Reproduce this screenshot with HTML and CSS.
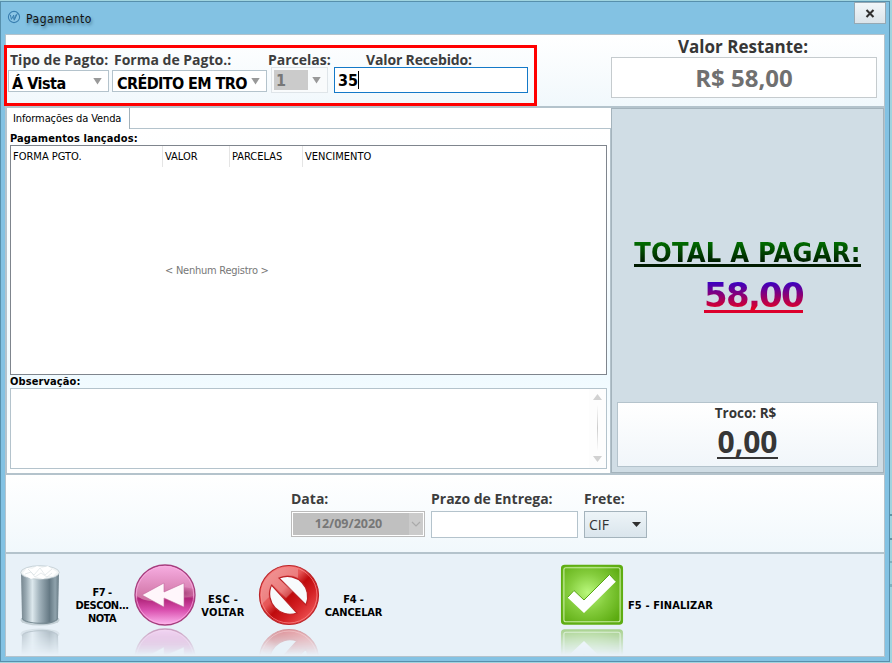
FILE: index.html
```html
<!DOCTYPE html>
<html lang="pt-BR">
<head>
<meta charset="utf-8">
<title>Pagamento</title>
<link rel="stylesheet" href="styles.css">
</head>
<body>
<div class="window">
  <header class="titlebar">
    <svg class="app-icon" width="14" height="14" viewBox="0 0 14 14"><circle cx="7" cy="7" r="5.6" fill="#8cc6e6" stroke="#397fb0" stroke-width="1.1"/><path d="M3.4 4.8l1 4.6 2.3-4.3.2 4.3 2.4-5M10.5 3.2L7.2 10.4" fill="none" stroke="#397fb0" stroke-width="1"/></svg>
    <span class="title">Pagamento</span>
    <button class="close" aria-label="Fechar"><svg width="10" height="9" viewBox="0 0 10 9"><path d="M1.5 1l7 7M8.500 1l-7 7" stroke="#303030" stroke-width="2.1"/></svg></button>
  </header>
  <main class="client">
    <section class="top">
      <div class="fields">
        <div class="field tipo"><label>Tipo de Pagto:</label><div class="combo"><span>Á Vista</span><i class="arrow"></i></div></div>
        <div class="field forma"><label>Forma de Pagto.:</label><div class="combo"><span>CRÉDITO EM TRO</span><i class="arrow"></i></div></div>
        <div class="field parcelas"><label>Parcelas:</label><div class="combo disabled"><span>1</span><i class="arrow"></i></div></div>
        <div class="field recebido"><label>Valor Recebido:</label><div class="entry"><span>35</span><i class="caret"></i></div></div>
      </div>
      <div class="restante"><div class="restante-label">Valor Restante:</div><div class="restante-value"><span>R$ 58,00</span></div></div>
    </section>
    <section class="middle">
      <div class="sale">
        <div class="tabs"><div class="tab">Informações da Venda</div><div class="tab-rest"></div></div>
        <div class="sheet">
          <div class="caption">Pagamentos lançados:</div>
          <div class="grid">
            <div class="columns"><span>FORMA PGTO.</span><span>VALOR</span><span>PARCELAS</span><span>VENCIMENTO</span></div>
            <div class="empty">&lt; Nenhum Registro &gt;</div>
          </div>
          <div class="caption obs">Observação:</div>
          <div class="memo"><div class="scroll"><i class="up"></i><i class="track"></i><i class="down"></i></div></div>
        </div>
      </div>
      <aside class="totals">
        <div class="total-label">TOTAL A PAGAR:</div>
        <div class="total-value">58,00</div>
        <div class="troco"><div class="troco-label">Troco: R$</div><div class="troco-value">0,00</div></div>
      </aside>
    </section>
    <section class="delivery">
      <div class="field data"><label>Data:</label><div class="date"><span>12/09/2020</span><i><svg width="10" height="6" viewBox="0 0 10 6"><path d="M1 1l4 4 4-4" fill="none" stroke="#aaa" stroke-width="1.2"/></svg></i></div></div>
      <div class="field prazo"><label>Prazo de Entrega:</label><div class="prazo-input"></div></div>
      <div class="field frete"><label>Frete:</label><div class="select"><span>CIF</span><i class="small-arrow"></i></div></div>
    </section>
    <footer class="actions">
      <button class="action discard">
        <svg width="64" height="92" viewBox="0 0 64 92">
          <defs>
            <linearGradient id="metal"><stop offset="0" stop-color="#75858e"/><stop offset=".13" stop-color="#99a9b2"/><stop offset=".3" stop-color="#dce8ed"/><stop offset=".48" stop-color="#a3b4bd"/><stop offset=".75" stop-color="#657984"/><stop offset=".9" stop-color="#8fa2ac"/><stop offset="1" stop-color="#687b85"/></linearGradient>
            <linearGradient id="fade" x1="0" y1="0" x2="0" y2="1"><stop offset="0" stop-color="#fff" stop-opacity=".5"/><stop offset="1" stop-color="#fff" stop-opacity="0"/></linearGradient>
            <mask id="reflection" maskUnits="userSpaceOnUse" x="0" y="64" width="64" height="28"><rect y="64" width="64" height="28" fill="url(#fade)"/></mask>
            <g id="bin"><ellipse cx="32" cy="57" rx="19.500" ry="5.600" fill="#c4d0d6"/><path d="M13 9l1 47c3 7 33 7 36 0l1-47z" fill="url(#metal)"/><path d="M14 55c3 7 33 7 36 0" fill="none" stroke="#758891"/><ellipse cx="32" cy="9.500" rx="19.300" ry="6.800" fill="#f1f4f5" stroke="#b9c5cb" stroke-width=".7"/><path d="M15 10l4-5 5 1 5-3 5 2 6-2 4 3 5 3-4 4-5 0-5 3-6-2-6 2-5-3z" fill="#fff"/><path d="M20 6l6 6 6-7 5 7 7-6M17 11l6-2 4 5 6-4 6 4 5-4" fill="none" stroke="#dbe2e5" stroke-width=".7"/></g>
          </defs>
          <use href="#bin"/><g mask="url(#reflection)"><use href="#bin" transform="matrix(1 0 0 -1 0 128)"/></g>
        </svg>
        <span>F7 -<br>DESCON...<br>NOTA</span>
      </button>
      <button class="action back">
        <svg width="64" height="92" viewBox="0 0 64 92">
          <defs>
            <linearGradient id="pink" x1="0" y1="0" x2="0" y2="1"><stop offset="0" stop-color="#eb8fcb"/><stop offset=".49" stop-color="#df86b8"/><stop offset=".56" stop-color="#b02379"/><stop offset=".75" stop-color="#d94fae"/><stop offset="1" stop-color="#ffb8f0"/></linearGradient>
            <linearGradient id="gloss" x1="0" y1="0" x2="0" y2="1"><stop offset="0" stop-color="#f6ace0"/><stop offset="1" stop-color="#cc6fa0"/></linearGradient>
            <radialGradient id="pinkglow" cx=".65" cy=".4" r=".6"><stop offset="0" stop-color="#8b255c" stop-opacity=".7"/><stop offset="1" stop-color="#bf3989" stop-opacity="0"/></radialGradient>
            <g id="rewind"><circle cx="32" cy="32" r="30" fill="url(#pink)" stroke="#a63e7e" stroke-width="1.3"/><path d="M3 32a29 29 0 0 1 58 0c-7 4-14 1-23 3-12 3-25 6-35-3z" fill="url(#gloss)"/><path d="M26 30c10-5 24-8 35-4l-1 9c-9 5-20 5-32 2z" fill="url(#pinkglow)"/><circle cx="32" cy="32" r="28.700" fill="none" stroke="#ffb4e7" stroke-opacity=".65"/><path d="M9 32l22-12v9l20-9v24l-20-9v9z" fill="#fff6fb" stroke="#c36a9d" stroke-width=".6"/></g>
          </defs>
          <use href="#rewind"/><g mask="url(#reflection)"><use href="#rewind" transform="matrix(1 0 0 -1 0 128)"/></g>
        </svg>
        <span>ESC -<br>VOLTAR</span>
      </button>
      <button class="action cancel">
        <svg width="64" height="92" viewBox="0 0 64 92">
          <defs>
            <linearGradient id="red" x1="0" y1="0" x2="1" y2="1"><stop offset="0" stop-color="#f08080"/><stop offset=".4" stop-color="#e65656"/><stop offset=".52" stop-color="#bf0b0d"/><stop offset=".67" stop-color="#d32024"/><stop offset="1" stop-color="#ff7070"/></linearGradient>
            <g id="forbid"><path fill-rule="evenodd" d="M32 2.500a29.500 29.500 0 1 1 0 59 29.500 29.500 0 0 1 0-59zM22 15l27 27C56 25 40 8 22 15zM14.500 22C7 39 23 56 40 50z" fill="url(#red)" stroke="#bc2226" stroke-width="1.2"/><path d="M4 34A28 28 0 0 1 41 6v9C34 11 27 12 21 15l15 13-7 7-14-14C12 26 11 31 12 34L4 42z" fill="#fff" opacity=".23"/><circle cx="32" cy="32" r="28" fill="none" stroke="#ff9696" stroke-width=".8" opacity=".8"/></g>
          </defs>
          <path d="M22 15l27 27C56 25 40 8 22 15zM14.500 22C7 39 23 56 40 50z" fill="#f8fbfd"/><use href="#forbid"/><g mask="url(#reflection)"><use href="#forbid" transform="matrix(1 0 0 -1 0 128)"/></g>
        </svg>
        <span>F4 -<br>CANCELAR</span>
      </button>
      <button class="action finish">
        <svg width="64" height="92" viewBox="0 0 64 92">
          <defs>
            <radialGradient id="green" cx=".43" cy=".46" r=".65"><stop offset="0" stop-color="#b9f87c"/><stop offset=".5" stop-color="#84cc3c"/><stop offset="1" stop-color="#5cab10"/></radialGradient>
            <g id="check"><rect x="1.700" y="2.500" width="60.600" height="58.500" rx="3" fill="url(#green)" stroke="#5fae13" stroke-width="1.500"/><rect x="3.900" y="4.700" width="56.200" height="54.100" rx="2" fill="none" stroke="#c8eda1" stroke-width="1.100"/><path d="M7.500 34.500l6.500-7 10 9.500 25.500-25.500 6.500 7-32 31.500z" fill="#fff"/><path d="M7.500 34.500l6.500-7 10 9.500 25.500-25.500 6.500 7" fill="none" stroke="#57a514"/></g>
          </defs>
          <use href="#check"/><g mask="url(#reflection)"><use href="#check" transform="matrix(1 0 0 -1 0 128)"/></g>
        </svg>
        <span>F5 - FINALIZAR</span>
      </button>
    </footer>
  </main>
</div>
</body>
</html>
```
FILE: styles.css
```css
*, *::before, *::after { box-sizing: border-box; }
body { margin: 0; width: 892px; height: 663px; overflow: hidden; background: linear-gradient(#5d95a5, #5d95a5) 890px 514px / 2px 2px no-repeat, linear-gradient(#5d95a5, #5d95a5) 890px 538px / 2px 2px no-repeat, linear-gradient(#7db2c0, #7db2c0) 890px 561px / 2px 2px no-repeat, linear-gradient(#7db2c0, #7db2c0) 890px 584px / 2px 3px no-repeat, #a0d4df; font-family: "DejaVu Sans Condensed", "DejaVu Sans", sans-serif; font-stretch: condensed; }
button { font: inherit; padding: 0; }
i { display: block; flex: none; }
.window { width: 890px; height: 661px; margin-top: 1px; border: 1px solid #5790ac; background: #83c2e3; padding: 0 4px 4px; }
.titlebar { height: 32px; display: flex; align-items: flex-start; }
.app-icon { margin: 8px 0 0 2px; }
.title { margin: 9px 0 0 5px; font-size: 12px; line-height: 17px; color: #111; text-shadow: 1px 2px 3px #3e6f8a; letter-spacing: .55px; }
.close { width: 32px; height: 22px; margin: 0 -1px 0 auto; border: 1px solid #96a9b4; background: linear-gradient(#f1f6f9, #dbe4ea); display: flex; align-items: center; justify-content: center; }
.client { height: 623px; border: 1px solid #b4c3cc; display: flex; flex-direction: column; }
.top { height: 73px; background: linear-gradient(#fff, #f1f8fc); border-bottom: 2px solid #b4c3cc; display: flex; justify-content: space-between; }
.fields { position: relative; display: flex; align-items: flex-start; padding: 17px 0 0 2px; }
.fields::after { content: ""; position: absolute; left: -2px; top: 10px; width: 533px; height: 61px; border: 3px solid #f00; }
.field label { display: block; font-family: "Open Sans", sans-serif; font-stretch: normal; font-weight: 700; font-size: 14px; line-height: 16px; color: #3d3d3d; white-space: nowrap; }
.tipo { width: 101px; margin-right: 3px; }
.forma { width: 155px; margin-right: 4px; }
.parcelas { width: 57px; margin-right: 6px; }
.recebido { width: 194px; }
.tipo label, .forma label { padding-left: 2px; }
.parcelas label { margin-left: -3px; }
.recebido label { padding-left: 32px; letter-spacing: -.15px; }
.combo { height: 22px; margin-top: 2px; background: #fff; border: 1px solid #b4c3cc; display: flex; justify-content: space-between; align-items: center; padding: 0 6px 0 4px; font-size: 16px; font-weight: 700; line-height: 22px; white-space: nowrap; overflow: hidden; }
.tipo .combo span, .forma .combo span { padding-top: 5px; }
.tipo .combo { letter-spacing: -.5px; padding-left: 3px; }
.forma .combo { letter-spacing: -.6px; }
.arrow { width: 9px; height: 7px; background: #999; clip-path: polygon(0 0, 100% 0, 50% 100%); }
.combo.disabled { height: 26px; margin-top: -1px; padding: 0 6px 0 2px; border-color: #dfe5e9; background: #f9fbfc; color: #777; }
.disabled span { width: 34px; height: 20px; line-height: 21px; padding-left: 2px; background: #cbcbcb; }
.entry { height: 26px; margin-top: -1px; background: #fff; border: 1px solid #1479c8; padding-left: 3px; display: flex; align-items: center; font-size: 16px; font-weight: 700; }
.caret { width: 1px; height: 18px; background: #000; }
.restante { width: 266px; margin-right: 7px; text-align: center; font-stretch: normal; }
.restante-label { height: 22px; padding: 2px 2px 0 0; font: 700 17px/20px "Open Sans", sans-serif; color: #363636; }
.restante-value { height: 41px; border: 1px solid #c5cbce; background: #fff; font: 700 24px/40px "Open Sans", sans-serif; color: #707070; }
.middle { height: 367px; display: flex; border-bottom: 2px solid #b4c3cc; }
.sale { flex: none; width: 605px; background: #fff; display: flex; flex-direction: column; }
.tabs { height: 21px; display: flex; }
.tab { width: 124px; border-right: 1px solid #a3b1ba; border-left: 1px solid #b4c3cc; font-size: 11px; line-height: 22px; padding-left: 6px; letter-spacing: -.1px; white-space: nowrap; }
.tab-rest { flex: 1; border-bottom: 1px solid #b4c3cc; }
.sheet { flex: 1; padding: 3px 3px 0; border: solid #b4c3cc; border-width: 0 1px; background: linear-gradient(#fff, #effaff 70%, #fff); }
.caption { height: 13px; font-size: 11px; line-height: 14px; font-weight: 700; letter-spacing: .1px; }
.grid { height: 230px; border: 1px solid #7f858d; background: #fff; }
.columns { display: grid; grid-template-columns: 152px 67px 73px 1fr; height: 19px; font-size: 11px; line-height: 21px; letter-spacing: 0; }
.columns span { border-right: 1px solid #e5e5e5; padding-left: 2px; }
.columns span:last-child { border: 0; }
.empty { padding: 96px 0 0 154px; font-size: 11px; line-height: 20px; color: #777; letter-spacing: -.25px; }
.memo { height: 81px; border: 1px solid #b4c3cc; background: #fff; display: flex; justify-content: flex-end; }
.scroll { width: 17px; background: #fdfdfd; display: flex; flex-direction: column; align-items: center; justify-content: space-between; padding: 5px 0 6px; }
.up, .down { width: 9px; height: 6px; background: #d1d1d1; clip-path: polygon(50% 0, 100% 100%, 0 100%); }
.down { transform: scaleY(-1); }
.track { width: 1px; height: 48px; background: linear-gradient(#fff, #ccc, #fff); }
.totals { flex: 1; background: #d0dde5; border: 1px solid #a4b3bc; padding: 0 5px; display: flex; flex-direction: column; align-items: center; color: #363636; }
.total-label, .total-value { width: max-content; color: transparent; background-clip: text; -webkit-background-clip: text; font-weight: 700; position: relative; }
.total-label { margin-top: 127px; height: 35px; font-size: 27px; line-height: 34px; letter-spacing: .25px; background-image: linear-gradient(#007800 10%, #001500 80%); }
.total-label::after, .total-value::after { content: ""; position: absolute; left: 0; right: 0; height: 3px; }
.total-label::after { top: 28px; background: #001b00; }
.total-value { font-family: "DejaVu Sans", sans-serif; font-stretch: normal; font-size: 34px; line-height: 40px; letter-spacing: -1.7px; margin: 4px 0 0 12px; background-image: linear-gradient(#1800e0 5%, #f00018 90%); }
.total-value::after { top: 35px; background: #dc002c; }
.troco { width: 261px; height: 65px; margin: auto 0 5px; border: 1px solid #b4c3cc; background: linear-gradient(#fff, #f1f6fa); text-align: center; font-family: "Open Sans", sans-serif; font-stretch: normal; font-weight: 700; }
.troco-label { font-size: 13.5px; line-height: 21px; height: 22px; padding-right: 4px; }
.troco-value { width: max-content; margin: 0 auto; font-size: 30px; line-height: 34px; height: 34px; border-bottom: 2px solid #363636; }
.delivery { height: 79px; background: linear-gradient(#fff, #f1f8fc); border-bottom: 2px solid #b4c3cc; display: flex; padding: 16px 0 0 285px; }
.data { width: 134px; margin-right: 6px; }
.prazo { width: 147px; margin-right: 6px; }
.frete { width: 63px; }
.date { height: 26px; margin-top: 4px; border: 1px solid #bbb; padding: 1px; background: #fff; display: flex; color: #777; font: 700 12.5px/22px "Open Sans", sans-serif; }
.date span { flex: 1; background: #c0c0c0; text-align: center; padding-right: 5px; }
.date i { width: 14px; background: #cbcbcb; display: flex; align-items: center; justify-content: center; }
.prazo-input { height: 27px; margin-top: 4px; border: 1px solid #b4c3cc; background: #fff; }
.select { height: 27px; margin-top: 4px; border: 1px solid #a4b3bc; background: linear-gradient(#edf4f8, #dae5ec); padding: 0 5px 0 4px; display: flex; justify-content: space-between; align-items: center; font: 14px/22px "Open Sans", sans-serif; color: #333; }
.small-arrow { width: 9px; height: 5px; background: #303030; clip-path: polygon(0 0, 100% 0, 50% 100%); }
.actions { flex: 1; min-height: 0; overflow: hidden; background: #e8f1f8; display: flex; padding: 9px 0 0 2px; }
.action { flex: none; height: 92px; border: 0; background: none; display: flex; align-items: flex-start; font-size: 11px; font-weight: 700; line-height: 13px; color: #000; letter-spacing: -.15px; white-space: nowrap; }
.action svg { flex: none; }
.action span { text-align: center; }
.discard { width: 125px; }
.discard span { width: 60px; margin-top: 23px; letter-spacing: -.5px; }
.back { width: 124px; }
.back span { width: 52px; margin-top: 30px; letter-spacing: .3px; }
.cancel { width: 303px; }
.cancel span { width: 65px; margin-top: 30px; }
.finish span { margin: 36px 0 0 4px; letter-spacing: .1px; }
```
